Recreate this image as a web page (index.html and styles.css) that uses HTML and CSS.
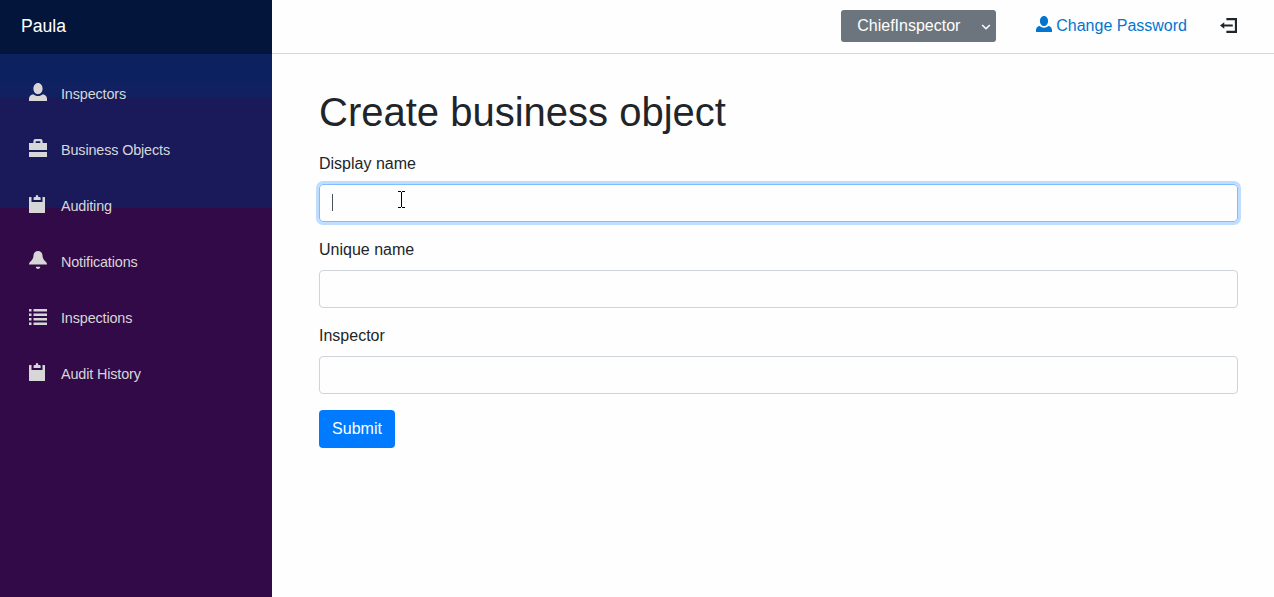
FILE: index.html
```html
<!DOCTYPE html>
<html lang="en">
<head>
<meta charset="utf-8">
<title>Paula</title>
<link rel="stylesheet" href="styles.css">
</head>
<body>
<svg class="defs" aria-hidden="true">
  <symbol id="person" viewBox="0 0 18 18"><path d="M9 0C6.400 0 4.400 2.500 4.400 5.600S6.400 11.300 9 11.300s4.600-2.600 4.600-5.700S11.600 0 9 0zM4.300 11.200C1.900 11.300 0 13.300 0 15.700V18h18v-2.300c0-2.400-1.900-4.400-4.300-4.500-1.200 1.100-2.900 1.900-4.700 1.900s-3.500-.8-4.700-1.900z"/></symbol>
  <symbol id="briefcase" viewBox="0 0 18 18"><path d="M4.400 4V2q0-2 2-2h5.200q2 0 2 2v2H18v7H0V4zM6.700 4h4.600V2.200H6.700zM0 13h18v5H0z"/></symbol>
  <symbol id="clipboard" viewBox="0 0 18 18"><path d="M8 0q-1.200 0-1.200 1.200V2H5.600Q4.600 2 4.600 3v2h7V3q0-1-1-1H9.200v-.8Q9.200 0 8 0zM.6 2Q0 2 0 2.600v14.800Q0 18 .6 18h14.800q.6 0 .6-.6V2.600Q16 2 15.400 2H13.500v5H2.500V2z"/></symbol>
  <symbol id="bell" viewBox="0 0 8 8"><path d="M4 0c-1.100 0-2 .9-2 2 0 1.040-.52 1.980-1.340 2.660-.41.34-.66.82-.66 1.340h8c0-.52-.24-1-.66-1.340-.82-.68-1.340-1.620-1.340-2.660 0-1.100-.89-2-2-2zm-1 7c0 .55.45 1 1 1s1-.45 1-1h-2z"/></symbol>
  <symbol id="list" viewBox="0 0 18 18"><path d="M0 2h2.500v2.500H0zM4.500 2H18v2.500H4.500zM0 6.500h2.500V9H0zM4.500 6.500H18V9H4.500zM0 11h2.500v2.500H0zM4.500 11H18v2.500H4.500zM0 15.500h2.500V18H0zM4.500 15.500H18V18H4.500z"/></symbol>
  <symbol id="logout" viewBox="0 0 8 8"><path d="M3 0v1h4v5h-4v1h5v-7h-5zm-1 2l-2 1.500 2 1.500v-1h4v-1h-4v-1z"/></symbol>
</svg>
<div class="page">
  <aside class="sidebar">
    <div class="brand">Paula</div>
    <nav class="nav">
      <a class="nav-item"><svg class="nav-icon"><use href="#person"/></svg><span>Inspectors</span></a>
      <a class="nav-item"><svg class="nav-icon"><use href="#briefcase"/></svg><span>Business Objects</span></a>
      <a class="nav-item"><svg class="nav-icon"><use href="#clipboard"/></svg><span>Auditing</span></a>
      <a class="nav-item"><svg class="nav-icon"><use href="#bell"/></svg><span>Notifications</span></a>
      <a class="nav-item"><svg class="nav-icon"><use href="#list"/></svg><span>Inspections</span></a>
      <a class="nav-item"><svg class="nav-icon"><use href="#clipboard"/></svg><span>Audit History</span></a>
    </nav>
  </aside>
  <main class="main">
    <header class="topbar">
      <div class="role"><span>ChiefInspector</span><svg class="chevron" viewBox="0 0 10 8"><path d="M1.200 2l3.800 3.800L8.800 2"/></svg></div>
      <a class="password"><svg class="top-icon"><use href="#person"/></svg><span>Change Password</span></a>
      <svg class="logout"><use href="#logout"/></svg>
    </header>
    <form class="content">
      <h1 class="title">Create business object</h1>
      <div class="field">
        <label class="label">Display name</label>
        <div class="input focused"><span class="caret"></span>
          <svg class="pointer" viewBox="0 0 7 17"><path d="M0 .5h3M4 .5h3M3.500 1v15M0 16.500h3M4 16.500h3"/></svg>
        </div>
      </div>
      <div class="field"><label class="label">Unique name</label><div class="input"></div></div>
      <div class="field"><label class="label">Inspector</label><div class="input"></div></div>
      <button class="submit" type="button">Submit</button>
    </form>
  </main>
</div>
</body>
</html>
```
FILE: styles.css
```css
* { box-sizing: border-box; }
body {
  margin: 0;
  font: 16px/24px "Liberation Sans", Arial, sans-serif;
  color: #212529;
  background: #fefefe;
}
.defs { display: none; }
svg { flex: none; fill: currentColor; }
.page { display: flex; height: 597px; overflow: hidden; }
.sidebar {
  width: 272px;
  flex: none;
  background: linear-gradient(#0b2160 0 82px, #102060 82px 97px, #1a1a5b 97px 208px, #330a48 208px);
}
.brand {
  height: 54px;
  padding: 11px 21px;
  font-size: 17.6px;
  line-height: 30px;
  color: #fff;
  background: #03153b;
}
.nav { display: flex; flex-direction: column; gap: 8px; padding: 16px 12px; }
.nav-item {
  display: flex;
  align-items: center;
  height: 48px;
  padding-left: 17px;
  gap: 14px;
  font-size: 14.4px;
  letter-spacing: -0.14px;
  color: #d7d7d7;
}
.nav-icon { width: 18px; height: 18px; margin-bottom: 4px; }
.main { flex: 1; min-width: 0; }
.topbar {
  display: flex;
  justify-content: flex-end;
  align-items: flex-start;
  height: 54px;
  padding: 10px 37px 0 0;
  border-bottom: 1px solid #d6d5d5;
}
.role {
  display: flex;
  align-items: center;
  justify-content: space-between;
  width: 155px;
  height: 32px;
  padding: 0 5px 0 16px;
  border-radius: 3px;
  color: #fff;
  background: #6c757d;
}
.chevron { width: 10px; height: 8px; margin-top: 1px; fill: none; stroke: currentColor; stroke-width: 1.5; }
.password {
  display: flex;
  gap: 4px;
  margin: 4px 33px 0 40px;
  color: #0275d0;
}
.top-icon { width: 16px; height: 16px; margin-top: 2px; }
.logout { width: 17px; height: 17px; margin-top: 8px; }
.content { padding: 34px 36px 0 47px; }
.title { margin: 0 0 16px; font-size: 40px; line-height: 48px; font-weight: 400; }
.field { margin-bottom: 16px; }
.label { display: block; margin-bottom: 9px; line-height: 23px; }
.input {
  position: relative;
  height: 38px;
  padding: 9px 12px;
  border: 1px solid #ced4da;
  border-radius: 4px;
}
.focused { border-color: #80bdff; box-shadow: 0 0 0 3px #bfdeff; }
.caret { display: block; width: 1px; height: 17px; background: #495057; }
.pointer {
  position: absolute;
  left: 78px;
  top: 6px;
  width: 7px;
  height: 17px;
  stroke: #000;
}
.submit {
  display: block;
  width: 76px;
  height: 38px;
  padding: 0;
  border: 0;
  border-radius: 4px;
  font: inherit;
  color: #fff;
  background: #007bff;
}
```
